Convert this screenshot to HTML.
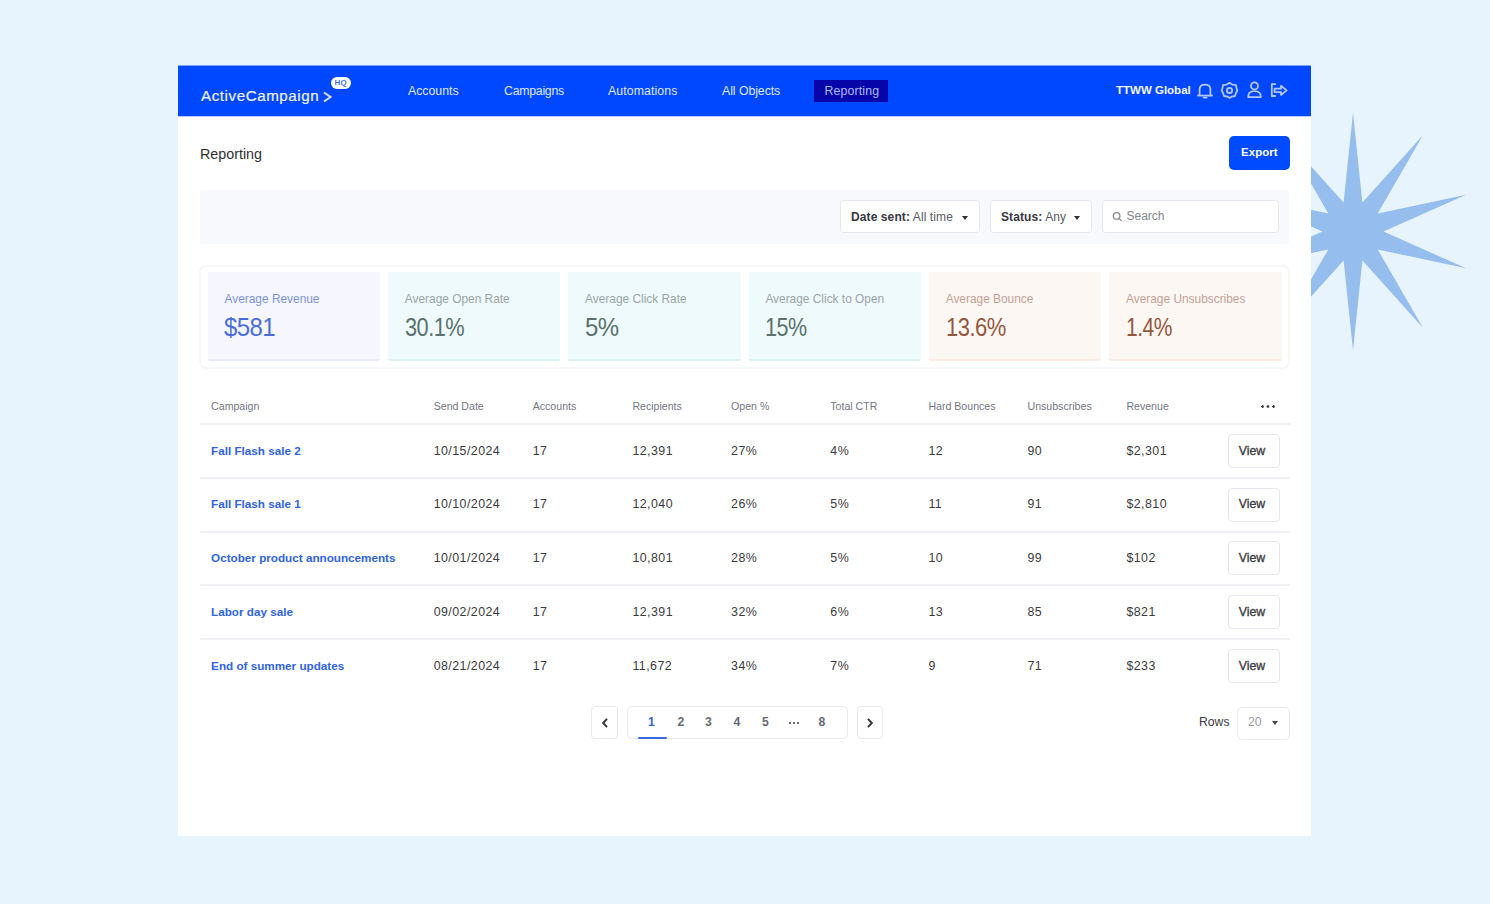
<!DOCTYPE html>
<html><head><meta charset="utf-8">
<style>
*{box-sizing:border-box;margin:0;padding:0}
html,body{width:1490px;height:904px;overflow:hidden;background:#E8F4FD;font-family:"Liberation Sans",sans-serif;position:relative}
.a{position:absolute;white-space:nowrap}
#star{position:absolute;left:0;top:0}
#card{position:absolute;left:178px;top:65.5px;width:1133px;height:770.5px;background:#fff}
#hdr{position:absolute;left:178px;top:65.5px;width:1133px;height:50.2px;background:#0048FF;box-shadow:0 -1px 0 rgba(0,72,255,.45),0 1px 0 rgba(0,72,255,.3)}
.nav{color:#DFE7FF;font-size:12.3px;top:83.5px}
.tab{left:814px;top:80px;width:74px;height:21.5px;background:#0505AA}
.title{left:200px;top:146px;font-size:14.3px;color:#2F2F33}
.btn{left:1229px;top:135.5px;width:61px;height:34.5px;background:#004BFF;border-radius:5px}
.bar{left:200px;top:190px;width:1089px;height:54px;background:#F8F9FD;border-radius:3px}
.dd{top:200px;height:33px;background:#fff;border:1px solid #E6E6F0;border-bottom-width:1.5px;border-radius:3.5px}
.caret{width:0;height:0;border-left:3.5px solid transparent;border-right:3.5px solid transparent;border-top:4px solid #333}
.stats{left:198.5px;top:264.5px;width:1091px;height:104px;border:2.5px solid #F6F7F9;border-radius:7px}
.sc{top:272px;width:172.3px;height:89px}
.lbl{font-size:11.9px;top:292px}
.val{font-size:25px;top:313px;letter-spacing:-0.6px;transform-origin:0 0}
.th{font-size:10.6px;color:#757783;top:400px}
.hl{left:200px;width:1090px;height:2px;background:#F0F1F5}
.td{font-size:12.4px;color:#3A3A40;letter-spacing:0.45px}
.cp{font-size:11.7px;color:#3064E3;font-weight:700}
.vb{left:1228px;width:52px;height:34px;border:1px solid #E6E7EE;border-radius:4px;background:#fff}
.pg{font-size:12.2px;color:#676A74;top:715px;font-weight:700}
.vt{font-size:12.3px;color:#3C3D44;-webkit-text-stroke:0.35px #3C3D44}
</style></head><body>
<svg id="star" width="1490" height="904"><polygon fill="#95BDEE" points="1353.0,112.5 1362.4,202.5 1422.9,135.2 1377.7,213.6 1466.2,194.7 1383.5,231.5 1466.2,268.3 1377.7,249.4 1422.9,327.8 1362.4,260.5 1353.0,350.5 1343.6,260.5 1283.1,327.8 1328.3,249.4 1239.8,268.3 1322.5,231.5 1239.8,194.7 1328.3,213.6 1283.1,135.2 1343.6,202.5"/></svg>
<div id="card"></div>
<div id="hdr"></div>
<div class="a" style="left:201px;top:86.5px;font-size:15.2px;color:#F2F5FF;letter-spacing:0.55px;-webkit-text-stroke:0.15px #F2F5FF">ActiveCampaign</div>
<svg class="a" style="left:321.8px;top:91.2px" width="11" height="12" viewBox="0 0 11 12"><path d="M2 1.5 L8.5 6 L2 10.5" stroke="#D0DCFF" stroke-width="2.1" fill="none" stroke-linejoin="miter"/></svg>
<div class="a" style="left:331px;top:76.7px;width:19.5px;height:12.6px;background:#fff;border-radius:6.3px;font-size:8px;font-weight:700;color:#4A72F2;text-align:center;line-height:12.6px;letter-spacing:0.3px">HQ</div>
<div class="a nav" style="left:408px">Accounts</div>
<div class="a nav" style="left:504px;letter-spacing:-0.25px">Campaigns</div>
<div class="a nav" style="left:608px;letter-spacing:0.1px">Automations</div>
<div class="a nav" style="left:722px;letter-spacing:-0.05px">All Objects</div>
<div class="a tab"></div>
<div class="a nav" style="left:824.5px;color:#B0BBF6;letter-spacing:0.15px">Reporting</div>
<div class="a" style="left:1116px;top:83.5px;font-size:11.5px;font-weight:700;color:#F4F6FF">TTWW Global</div>
<div class="a title">Reporting</div>
<div class="a btn"></div>
<div class="a" style="left:1241px;top:145.5px;font-size:11.4px;font-weight:700;color:#fff;letter-spacing:0.1px">Export</div>
<div class="a bar"></div>
<div class="a dd" style="left:840px;width:140px"></div>
<div class="a" style="left:851px;top:209.5px;font-size:12px;color:#5A5B63;letter-spacing:0.1px"><b style="color:#38383F">Date sent:</b> All time</div>
<div class="a caret" style="left:962px;top:215.5px"></div>
<div class="a dd" style="left:990px;width:102px"></div>
<div class="a" style="left:1001px;top:209.5px;font-size:12px;color:#5A5B63;letter-spacing:0.1px"><b style="color:#38383F">Status:</b> Any</div>
<div class="a caret" style="left:1073.5px;top:215.5px"></div>
<div class="a dd" style="left:1101.5px;width:177.5px"></div>
<svg class="a" style="left:1110px;top:209px" width="14" height="14" viewBox="0 0 14 14" fill="none" stroke="#8A8B93" stroke-width="1.3"><circle cx="6.6" cy="6.9" r="3.3"/><path d="M9.1 9.4 L11.3 11.6" stroke-linecap="round"/></svg>
<div class="a" style="left:1126.5px;top:209px;font-size:12px;color:#85868E">Search</div>
<div class="a stats"></div>
<div class="a sc" style="left:207.8px;background:#F6F7FE;border-bottom:2px solid #E6EAFB;border-radius:2px"></div>
<div class="a lbl" style="left:224.5px;color:#7D93E3">Average Revenue</div>
<div class="a val" style="left:224.3px;color:#4A6DDB;transform:scaleX(0.96)">$581</div>
<div class="a sc" style="left:388.1px;background:#EEFAFB;border-bottom:2px solid #DCF2F0;border-radius:2px"></div>
<div class="a lbl" style="left:404.8px;color:#9BA5A8">Average Open Rate</div>
<div class="a val" style="left:404.6px;color:#5A716E;transform:scaleX(0.87)">30.1%</div>
<div class="a sc" style="left:568.4px;background:#EEFAFB;border-bottom:2px solid #DCF2F0;border-radius:2px"></div>
<div class="a lbl" style="left:585.1px;color:#9BA5A8">Average Click Rate</div>
<div class="a val" style="left:584.9px;color:#5A716E;transform:scaleX(0.96)">5%</div>
<div class="a sc" style="left:748.7px;background:#EEFAFB;border-bottom:2px solid #DCF2F0;border-radius:2px"></div>
<div class="a lbl" style="left:765.4px;color:#9BA5A8">Average Click to Open</div>
<div class="a val" style="left:765.2px;color:#5A716E;transform:scaleX(0.86)">15%</div>
<div class="a sc" style="left:929.0px;background:#FDF7F4;border-bottom:2px solid #FBECE6;border-radius:2px"></div>
<div class="a lbl" style="left:945.7px;color:#C4A196">Average Bounce</div>
<div class="a val" style="left:945.5px;color:#94573D;transform:scaleX(0.88)">13.6%</div>
<div class="a sc" style="left:1109.3px;background:#FDF7F4;border-bottom:2px solid #FBECE6;border-radius:2px"></div>
<div class="a lbl" style="left:1126.0px;color:#C4A196">Average Unsubscribes</div>
<div class="a val" style="left:1125.8px;color:#94573D;transform:scaleX(0.84)">1.4%</div>
<div class="a th" style="left:211.1px">Campaign</div>
<div class="a th" style="left:433.7px">Send Date</div>
<div class="a th" style="left:532.7px">Accounts</div>
<div class="a th" style="left:632.4px">Recipients</div>
<div class="a th" style="left:731.1px">Open %</div>
<div class="a th" style="left:830.3px">Total CTR</div>
<div class="a th" style="left:928.4px">Hard Bounces</div>
<div class="a th" style="left:1027.5px">Unsubscribes</div>
<div class="a th" style="left:1126.4px">Revenue</div>
<div class="a" style="left:1260.5px;top:404.5px;width:15px;height:3px;background:radial-gradient(circle at 1.5px 1.5px,#3a3a40 1.1px,transparent 1.5px) 0 0/5.5px 3px repeat-x"></div>
<div class="a hl" style="top:423px"></div>
<div class="a hl" style="top:477px"></div>
<div class="a hl" style="top:531px"></div>
<div class="a hl" style="top:584px"></div>
<div class="a hl" style="top:638px"></div>
<div class="a cp" style="left:211.1px;top:443.5px">Fall Flash sale 2</div>
<div class="a td" style="left:433.7px;top:443.5px">10/15/2024</div>
<div class="a td" style="left:532.7px;top:443.5px">17</div>
<div class="a td" style="left:632.4px;top:443.5px">12,391</div>
<div class="a td" style="left:731.1px;top:443.5px">27%</div>
<div class="a td" style="left:830.3px;top:443.5px">4%</div>
<div class="a td" style="left:928.4px;top:443.5px">12</div>
<div class="a td" style="left:1027.5px;top:443.5px">90</div>
<div class="a td" style="left:1126.4px;top:443.5px">$2,301</div>
<div class="a vb" style="top:433.8px"></div>
<div class="a vt" style="left:1238.7px;top:443.5px">View</div>
<div class="a cp" style="left:211.1px;top:497.3px">Fall Flash sale 1</div>
<div class="a td" style="left:433.7px;top:497.3px">10/10/2024</div>
<div class="a td" style="left:532.7px;top:497.3px">17</div>
<div class="a td" style="left:632.4px;top:497.3px">12,040</div>
<div class="a td" style="left:731.1px;top:497.3px">26%</div>
<div class="a td" style="left:830.3px;top:497.3px">5%</div>
<div class="a td" style="left:928.4px;top:497.3px">11</div>
<div class="a td" style="left:1027.5px;top:497.3px">91</div>
<div class="a td" style="left:1126.4px;top:497.3px">$2,810</div>
<div class="a vb" style="top:487.6px"></div>
<div class="a vt" style="left:1238.7px;top:497.3px">View</div>
<div class="a cp" style="left:211.1px;top:551.1px">October product announcements</div>
<div class="a td" style="left:433.7px;top:551.1px">10/01/2024</div>
<div class="a td" style="left:532.7px;top:551.1px">17</div>
<div class="a td" style="left:632.4px;top:551.1px">10,801</div>
<div class="a td" style="left:731.1px;top:551.1px">28%</div>
<div class="a td" style="left:830.3px;top:551.1px">5%</div>
<div class="a td" style="left:928.4px;top:551.1px">10</div>
<div class="a td" style="left:1027.5px;top:551.1px">99</div>
<div class="a td" style="left:1126.4px;top:551.1px">$102</div>
<div class="a vb" style="top:541.4px"></div>
<div class="a vt" style="left:1238.7px;top:551.1px">View</div>
<div class="a cp" style="left:211.1px;top:604.9px">Labor day sale</div>
<div class="a td" style="left:433.7px;top:604.9px">09/02/2024</div>
<div class="a td" style="left:532.7px;top:604.9px">17</div>
<div class="a td" style="left:632.4px;top:604.9px">12,391</div>
<div class="a td" style="left:731.1px;top:604.9px">32%</div>
<div class="a td" style="left:830.3px;top:604.9px">6%</div>
<div class="a td" style="left:928.4px;top:604.9px">13</div>
<div class="a td" style="left:1027.5px;top:604.9px">85</div>
<div class="a td" style="left:1126.4px;top:604.9px">$821</div>
<div class="a vb" style="top:595.2px"></div>
<div class="a vt" style="left:1238.7px;top:604.9px">View</div>
<div class="a cp" style="left:211.1px;top:658.7px">End of summer updates</div>
<div class="a td" style="left:433.7px;top:658.7px">08/21/2024</div>
<div class="a td" style="left:532.7px;top:658.7px">17</div>
<div class="a td" style="left:632.4px;top:658.7px">11,672</div>
<div class="a td" style="left:731.1px;top:658.7px">34%</div>
<div class="a td" style="left:830.3px;top:658.7px">7%</div>
<div class="a td" style="left:928.4px;top:658.7px">9</div>
<div class="a td" style="left:1027.5px;top:658.7px">71</div>
<div class="a td" style="left:1126.4px;top:658.7px">$233</div>
<div class="a vb" style="top:649.0px"></div>
<div class="a vt" style="left:1238.7px;top:658.7px">View</div>
<div class="a" style="left:591px;top:706px;width:27px;height:32.5px;border:1px solid #E8E9EF;border-radius:4px;background:#fff"></div>
<svg class="a" style="left:598px;top:716px" width="14" height="14" viewBox="0 0 14 14" fill="none" stroke="#38383E" stroke-width="2" stroke-linejoin="miter"><path d="M9 2.8 L5.2 7 L9 11.2"/></svg>
<div class="a" style="left:627.3px;top:706px;width:220.5px;height:32.5px;border:1px solid #E8E9EF;border-radius:5px;background:#fff"></div>
<div class="a" style="left:638px;top:736.5px;width:29px;height:2.5px;background:#3C69DE;border-radius:1px"></div>
<div class="a pg" style="left:648px;color:#3763DA;font-weight:700">1</div>
<div class="a pg" style="left:677.5px">2</div>
<div class="a pg" style="left:705px">3</div>
<div class="a pg" style="left:733.5px">4</div>
<div class="a pg" style="left:762px">5</div>
<div class="a" style="left:788.5px;top:721.5px;width:11px;height:2.5px;background:radial-gradient(circle at 1.25px 1.25px,#666a74 1.1px,transparent 1.4px) 0 0/4px 2.5px repeat-x"></div>
<div class="a pg" style="left:818.5px">8</div>
<div class="a" style="left:856.5px;top:706px;width:26px;height:32.5px;border:1px solid #E8E9EF;border-radius:4px;background:#fff"></div>
<svg class="a" style="left:862.5px;top:716px" width="14" height="14" viewBox="0 0 14 14" fill="none" stroke="#38383E" stroke-width="2" stroke-linejoin="miter"><path d="M5 2.8 L8.8 7 L5 11.2"/></svg>
<div class="a" style="left:1199px;top:715px;font-size:12.2px;color:#3A3A40">Rows</div>
<div class="a" style="left:1236.5px;top:706.5px;width:53px;height:33px;border:1px solid #E8E9EF;border-radius:5px;background:#fff"></div>
<div class="a" style="left:1248px;top:715px;font-size:12.2px;color:#9A9BA3">20</div>
<div class="a caret" style="left:1272px;top:720.5px;border-top-color:#44444a"></div>
<svg class="a" style="left:1190px;top:76px" width="104" height="28" viewBox="1190 76 104 28" fill="none" stroke="#B4C6FF" stroke-width="1.8" stroke-linejoin="round" stroke-linecap="round">
<path d="M1199.6 94.5 V89.5 Q1199.6 84.6 1205 84.6 Q1210.4 84.6 1210.4 89.5 V94.5 Q1212 94.9 1212 95.6 H1198 Q1198 94.9 1199.6 94.5 Z"/>
<path d="M1203.6 97.6 H1206.6"/>
<path d="M1229.5 82.8 L1232.3 84.6 L1235.8 84.9 L1236.6 88.2 L1237.3 90.5 L1236 93 L1234.9 96 L1231.7 96.6 L1229.5 98 L1227.3 96.6 L1224.1 96 L1223 93 L1221.7 90.5 L1222.4 88.2 L1223.2 84.9 L1226.7 84.6 Z"/>
<circle cx="1229.5" cy="90.4" r="2.6"/>
<circle cx="1254.5" cy="85.9" r="3.5"/>
<path d="M1248.2 97.2 Q1248 91.2 1254.5 91.2 Q1261 91.2 1260.8 97.2 Z"/>
<path d="M1275.2 84.2 H1271.8 V96 H1275.2"/>
<path d="M1274.6 88.7 H1281 V85.8 L1286.6 90.4 L1281 95 V92.2 H1274.6 Z"/>
</svg>
</body></html>
